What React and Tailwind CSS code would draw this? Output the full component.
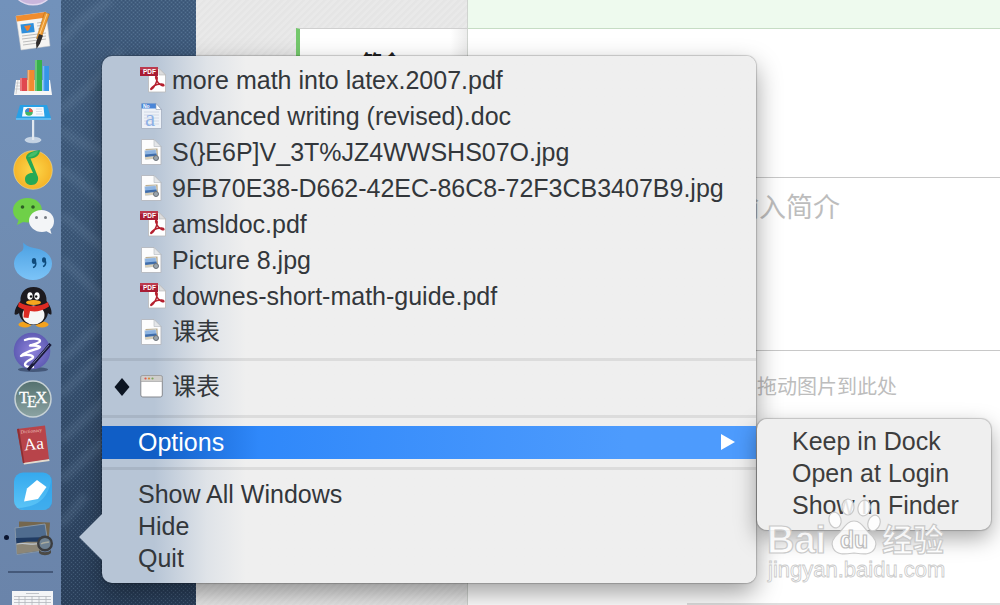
const FILES = [
  { name: 'more math into latex.2007.pdf', type: 'pdf' },
  { name: 'advanced writing (revised).doc', type: 'doc' },
  { name: 'S(}E6P]V_3T%JZ4WWSHS07O.jpg', type: 'jpg' },
  { name: '9FB70E38-D662-42EC-86C8-72F3CB3407B9.jpg', type: 'jpg' },
  { name: 'amsldoc.pdf', type: 'pdf' },
  { name: 'Picture 8.jpg', type: 'jpg' },
  { name: 'downes-short-math-guide.pdf', type: 'pdf' },
  { name: '课表', type: 'jpg', cjk: true },
]

const ACTIONS = ['Show All Windows', 'Hide', 'Quit']
const OPTIONS = ['Keep in Dock', 'Open at Login', 'Show in Finder']

/* ---------- menu icons ---------- */

function PdfIcon() {
  return (
    <svg viewBox="0 0 26 26" className="h-[26px] w-[26px] shrink-0">
      <path d="M8.500 1.500H19l6.500 6.500v17H8.500z" fill="#fff" stroke="#b9b9b9" strokeWidth=".8" />
      <path d="M19 1.500v6.500h6.500z" fill="#ddd" stroke="#b5b5b5" strokeWidth=".6" />
      <path d="M16 9.500c2 0 1 4 .2 6-.9 2.500-3.400 7-5 7-1.500-.5 2-4 6-5 3-.8 6.500-.6 6.700.7 0 1.300-3.500.1-5.500-2.200-1.700-2-3.600-6.400-2.400-6.500z" fill="none" stroke="#b5202f" strokeWidth="1.500" />
      <rect x="0" y="0" width="18" height="9" fill="#a81c34" />
      <rect x="0" y="0" width="18" height="3" fill="#bb3a4e" />
      <text x="3" y="7" fontSize="6.500" fontWeight="700" fill="#fff" fontFamily="Liberation Sans">PDF</text>
    </svg>
  )
}

function DocIcon() {
  return (
    <svg viewBox="0 0 26 26" className="h-[26px] w-[26px] shrink-0">
      <path d="M1.500.5H16l5.500 6v19h-20z" fill="#eef2f8" stroke="#a9b3c4" strokeWidth=".9" />
      <path d="M1.500.5H16l3 5H1.500z" fill="#4a86d8" />
      <path d="M16 .5v6h5.500z" fill="#fff" stroke="#8f9bb0" strokeWidth=".6" />
      <path d="M4 9h15M4 12h15M4 15h15M4 18h15M4 21h15" stroke="#c9d2e0" strokeWidth=".8" />
      <text x="5" y="23" fontSize="23" fill="#8fb1e6" fontFamily="Liberation Serif">a</text>
      <text x="3" y="4.800" fontSize="5" fontWeight="700" fill="#fff" fontFamily="Liberation Sans">No</text>
    </svg>
  )
}

function JpgIcon() {
  return (
    <svg viewBox="0 0 26 26" className="h-[26px] w-[26px] shrink-0">
      <path d="M1.500.5H14l7 7v18H1.500z" fill="#fdfdfd" stroke="#b4b8be" strokeWidth=".9" />
      <path d="M14 .5v7h7z" fill="#e4e6e9" stroke="#b4b8be" strokeWidth=".6" />
      <path d="M5.500 10l12-.6.4 9-12 1z" fill="#b9a987" />
      <path d="M4.500 11.500l11.500-1 .8 9-11.500 1z" fill="#8db4e2" stroke="#e8e8e8" strokeWidth=".5" />
      <path d="M5 15.500l11.500-1 .3 2.500-11.500 1.200z" fill="#3f6dab" />
      <path d="M5.200 18l11.500-1 .1 2.500-11.500 1z" fill="#d8cfb8" />
      <circle cx="16" cy="19" r="2.500" fill="#9aa5ae" stroke="#6a7077" strokeWidth="1" />
    </svg>
  )
}

function WindowIcon() {
  return (
    <svg viewBox="0 0 26 26" className="h-[26px] w-[26px] shrink-0">
      <rect x=".8" y="1.500" width="21.500" height="21.500" rx="2" fill="#fff" stroke="#86898e" />
      <path d="M.8 7.500v-4a2 2 0 0 1 2-2h17.500a2 2 0 0 1 2 2v4z" fill="#cfcdca" stroke="#98989a" strokeWidth=".6" />
      <circle cx="5.500" cy="4.500" r="1.100" fill="#e0554c" />
      <circle cx="9" cy="4.500" r="1.100" fill="#d98a3a" />
      <circle cx="12.500" cy="4.500" r="1.100" fill="#7ba65a" />
    </svg>
  )
}

const FILE_ICONS = { pdf: PdfIcon, doc: DocIcon, jpg: JpgIcon }

/* ---------- dock icons, all drawn on a 40x40 grid ---------- */

const DOCK = [
  {
    label: 'Pages',
    art: (
      <>
        <path d="M3 5l30-4 4 34-29 4z" fill="#f5f4f2" stroke="#c9c9c9" strokeWidth=".5" />
        <path d="M3 5l30-4 .7 5.500L3.800 10.500z" fill="#f08c2e" />
        <path d="M7.500 13.500l13-1.500 1.200 9-13 1.500z" fill="#2f8fdc" />
        <path d="M11 15l7-1-2 5-2 1z" fill="#f0802a" />
        <path d="M24 12l7-1M24 15l8-1M25 18l7-1M9 25l24-3M9 28l24-3M10 31l23-3M10 34l15-2" stroke="#b5b5b5" strokeWidth=".9" />
        <path d="M31.500 1.500l5 1.500-9 26-4-1.500z" fill="#ee9b32" stroke="#a86515" strokeWidth=".5" />
        <path d="M34 2.500l-9 25.500" stroke="#fbd08a" strokeWidth="1" />
        <path d="M26 23l4 1.500-3 8-3.500 5.500-.5-6.500z" fill="#2e2b2b" />
      </>
    ),
  },
  {
    label: 'Numbers',
    art: (
      <>
        <path d="M3 23h34l2 15H1z" fill="#f6f6f6" />
        <path d="M3 26h4M3 29h4M2 32h5M5 23L3 37" stroke="#bbb" strokeWidth=".6" />
        <rect x="7" y="21" width="7" height="13" fill="#e0484f" />
        <rect x="14.500" y="13" width="7" height="21" fill="#f28a30" />
        <rect x="22" y="3" width="7" height="31" fill="#36b24a" />
        <rect x="29.500" y="9" width="6.500" height="25" fill="#3595e8" />
        <path d="M8 21v13M15.500 13v21M23 3v31M30.500 9v25" stroke="#fff" strokeOpacity=".35" strokeWidth="1.500" />
      </>
    ),
  },
  {
    label: 'Keynote',
    art: (
      <>
        <ellipse cx="20" cy="37" rx="8" ry="2.800" fill="#c5d3e4" stroke="#dce6f0" strokeWidth=".6" />
        <rect x="19" y="16" width="2.200" height="21" fill="#e2e8ef" />
        <path d="M7 2h27l4 13H3z" fill="#28a0e6" />
        <path d="M3 15h35v2H3z" fill="#5fbaf0" />
        <path d="M10.500 4h20l1 9.500H9z" fill="#f4f9fd" />
        <circle cx="16" cy="9" r="3.800" fill="#42b462" />
        <path d="M16 9V5.200a3.800 3.800 0 0 1 3.800 3.800z" fill="#e9574a" />
        <path d="M16 9h-3.800A3.800 3.800 0 0 1 16 5.200z" fill="#3a86d8" />
        <path d="M23 6h6M23 8.500h6M23 11h7" stroke="#ccd6df" strokeWidth=".8" />
      </>
    ),
  },
  {
    label: 'QQ Music',
    art: (
      <>
        <circle cx="20" cy="21" r="19.300" fill="url(#gold)" stroke="#f3dd91" strokeWidth=".6" />
        <path d="M13 9c0-5 6-7 14-8 0 5-4 8-9.500 8.500L25 28c.8 4.500-2 8-6.500 8S12 33.500 12 30c0-4 4-6.500 8-6z" fill="#27a955" />
        <path d="M15 8c2-4 6-5.500 10-6-1 4-5 6-10 6z" fill="#46be68" />
      </>
    ),
  },
  {
    label: 'WeChat',
    art: (
      <>
        <path d="M14.500 3C6 3 0 8.500 0 15.500c0 4 2 7.500 5.500 9.500L4 30l6-3c9 2 19-3 19-11.500C29 8.500 23 3 14.500 3z" fill="#6fd048" />
        <circle cx="9.500" cy="12" r="1.800" fill="#2f5f26" />
        <circle cx="20" cy="12" r="1.800" fill="#2f5f26" />
        <path d="M28.500 15C21 15 16 20 16 26s6 11 13 11c1.500 0 3-.2 4.500-.7L38.500 39l-1.300-4.500C40 32.500 41 29.500 41 26c0-6-5-11-12.500-11z" fill="#f3f5f7" />
        <circle cx="23.500" cy="22.500" r="1.500" fill="#767c82" />
        <circle cx="32.500" cy="22.500" r="1.500" fill="#767c82" />
      </>
    ),
  },
  {
    label: 'Aliwangwang',
    art: (
      <>
        <path d="M10 1.500c2 2 5 4.500 11 5.500 10 1.500 18 7 18 15.500C39 32 30 39 20 39S1 32 1 22.500c0-5 3-9.500 8-12.500 2-2 1.500-5 1-8.500z" fill="url(#drop)" />
        <ellipse cx="21" cy="20" rx="2.200" ry="3" fill="#0f4b7c" />
        <path d="M22.500 21c1 3-.5 5-2.500 5.500" fill="none" stroke="#0f4b7c" strokeWidth="1.600" />
        <ellipse cx="31" cy="19" rx="2" ry="2.800" fill="#0f4b7c" />
        <path d="M32.300 20c1 3-.5 5-2.300 5.500" fill="none" stroke="#0f4b7c" strokeWidth="1.600" />
      </>
    ),
  },
  {
    label: 'QQ',
    art: (
      <>
        <ellipse cx="12" cy="37.500" rx="6.500" ry="3" fill="#f3a21d" />
        <ellipse cx="29" cy="37.500" rx="6.500" ry="3" fill="#f3a21d" />
        <path d="M20.500 0C12 0 7 6 7.500 14 4 18 1.500 22 1.500 27c1 1.500 3 .5 4.500-1 1 7 7 12 14.500 12S34 33 35 26c1.500 1.500 3 2 3.500 1 .5-5-2-9-5-13C34 6 29 0 20.500 0z" fill="#1c1a1f" />
        <ellipse cx="20.500" cy="28" rx="11" ry="9.500" fill="#f6f6f6" />
        <ellipse cx="17" cy="9" rx="2.700" ry="3.800" fill="#fff" />
        <ellipse cx="24" cy="9" rx="2.700" ry="3.800" fill="#fff" />
        <circle cx="18" cy="9.500" r="1.200" fill="#111" />
        <circle cx="23.200" cy="9.500" r="1.200" fill="#111" />
        <ellipse cx="20.500" cy="15.500" rx="7.500" ry="2.600" fill="#f6a61f" />
        <path d="M6 15c8 5.500 21 5.500 29 0l1 4.500C29 24.500 22 25 17 24l-1.500 7-5-.5.5-8c-2-.6-4.500-1.700-6-3z" fill="#dd2b23" />
      </>
    ),
  },
  {
    label: 'Emacs',
    art: (
      <>
        <ellipse cx="20" cy="36.500" rx="15" ry="2.500" fill="#22304e" opacity=".55" />
        <circle cx="19" cy="18" r="18.300" fill="url(#violet)" />
        <path d="M12 7c5-2 15-2 15 1 0 2-6 3-10 4.500 4 .3 9-.5 10 1.500-1 2.500-13 3-19 9 5-2 13-1 12 1.500-1 2-8 3.500-8 7 0 2 4 3 8 2.500" fill="none" stroke="#fff" strokeWidth="2.400" strokeLinecap="round" strokeLinejoin="round" />
        <path d="M37.500 11L15 37" stroke="#191a38" strokeWidth="3.200" />
        <path d="M36 12L20 30.500" stroke="#8b90c4" strokeWidth=".8" />
      </>
    ),
  },
  {
    label: 'TeXShop',
    art: (
      <>
        <circle cx="20" cy="20" r="18" fill="url(#slate)" stroke="#c7d2d6" strokeWidth="1.500" />
        <g fontSize="16" fill="#fff" stroke="#fff" strokeWidth=".3" fontFamily="Liberation Serif">
          <text x="6" y="24">T</text>
          <text x="14" y="28">E</text>
          <text x="22.500" y="24">X</text>
        </g>
      </>
    ),
  },
  {
    label: 'Dictionary',
    art: (
      <>
        <path d="M10 37l26-3 .6 2L11 39.500z" fill="#e3dccf" />
        <path d="M4 4l28-3.500L36 34l-26 4z" fill="#b8444a" />
        <path d="M4 4l2-.2L11.500 38l-1.500.2z" fill="#8d2f33" />
        <g transform="rotate(-6 20 20)" fill="#fff" fontFamily="Liberation Serif">
          <text x="9" y="7.500" fontSize="5" fill="#eec4c0">Dictionary</text>
          <text x="11" y="24.500" fontSize="17">Aa</text>
        </g>
      </>
    ),
  },
  {
    label: 'Notes',
    art: (
      <>
        <rect x="1" y="1.500" width="38" height="37.500" rx="9" fill="url(#sky)" />
        <path d="M39 4C37 24 28 36 5 37c3 2 6 2 9 2h16c6 0 9-3 9-9z" fill="#2a9be6" opacity=".55" />
        <path d="M24 9l9.500 7-8.500 12-14 2.500 3-13z" fill="#fff" />
      </>
    ),
  },
  {
    label: 'Preview',
    running: true,
    art: (
      <>
        <path d="M6 4.500l31 1-2 27-29-1z" fill="#75674e" />
        <path d="M2 11l30-4 4 26-32 4.500z" fill="#4f6c8f" stroke="#8797a8" strokeWidth="1" />
        <path d="M3 21l31-1 .7 4L3.500 27z" fill="#203b62" />
        <path d="M3.500 27c8-4 20-1 31.500-3l1 8.500-32 4.500z" fill="#8c8677" />
        <path d="M3.500 27c10-2 14 2 26-1" stroke="#c2c9cf" strokeWidth="1.200" fill="none" />
        <circle cx="32" cy="26.500" r="6.800" fill="#6d8091" stroke="#3b3d40" strokeWidth="2.400" />
        <path d="M28 27c3-2 5-1 8-2" stroke="#a8aa9f" strokeWidth="1.500" fill="none" />
        <path d="M26 33c3 3 9 3 12 0v3c-3 3-9 3-12 0z" fill="#4c4a45" />
      </>
    ),
  },
]

function Gradients() {
  return (
    <svg className="absolute h-0 w-0" aria-hidden="true">
      <defs>
        <radialGradient id="gold"><stop offset="0" stopColor="#fdd84a" /><stop offset="1" stopColor="#f5b429" /></radialGradient>
        <linearGradient id="drop" x2="0" y2="1"><stop offset="0" stopColor="#4ba0e2" /><stop offset="1" stopColor="#7cc4f8" /></linearGradient>
        <radialGradient id="violet"><stop offset="0" stopColor="#8f83dc" /><stop offset="1" stopColor="#5f5cb4" /></radialGradient>
        <linearGradient id="slate" x2="0" y2="1"><stop offset="0" stopColor="#54716f" /><stop offset="1" stopColor="#8ba3a3" /></linearGradient>
        <linearGradient id="sky" x2="0" y2="1"><stop offset="0" stopColor="#35a9ee" /><stop offset="1" stopColor="#5cc5f7" /></linearGradient>
      </defs>
    </svg>
  )
}

function Dock() {
  return (
    <nav className="flex w-[61px] shrink-0 flex-col gap-1.5 bg-linear-to-b from-[#7292bb] via-[#6f8bb0] to-[#6a84aa]">
      <svg viewBox="0 0 40 5" className="ml-[13px] h-[5px] w-10 shrink-0 overflow-visible">
        <path d="M4-2c8 9 24 9 32 0z" fill="#c9b6dc" stroke="#e1d7ee" strokeWidth="1.500" />
      </svg>
      {DOCK.map(app => (
        <button key={app.label} aria-label={app.label} className="flex h-10 shrink-0 items-center">
          <span className="flex w-[13px] justify-center">
            {app.running && <span className="h-[5px] w-[5px] rounded-full bg-[#0b1530]" />}
          </span>
          <svg viewBox="0 0 40 40" className="h-10 w-10 overflow-visible">{app.art}</svg>
        </button>
      ))}
      <div className="mx-2 mt-2 h-0.5 shrink-0 bg-[#45597a]" />
      <svg viewBox="0 0 41 14" className="mt-3 ml-3 h-3.5 w-[41px] shrink-0">
        <rect width="41" height="14" fill="#f4f5f7" />
        <path d="M14 2.500h13M2 5.500h37M2 8.500h37M2 11.500h37M7 5v9M13 5v9M20 5v9M27 5v9M34 5v9" stroke="#b2b6bd" strokeWidth=".8" />
      </svg>
    </nav>
  )
}

function Wallpaper() {
  return (
    <div className="w-[135px] shrink-0 bg-linear-to-b from-[#415d7e] via-[#3a5575] to-[#2a3f5a]">
      <svg viewBox="0 0 135 605" preserveAspectRatio="none" className="h-full w-full">
        <defs>
          <pattern id="weave" width="4" height="4" patternUnits="userSpaceOnUse">
            <path d="M0 0h1v1H0zM2 2h1v1H2z" fill="#93b0cc" opacity=".22" />
            <path d="M2 0h1v1H2zM0 2h1v1H0z" fill="#0d1e36" opacity=".14" />
          </pattern>
          <filter id="soft"><feGaussianBlur stdDeviation="3" /></filter>
        </defs>
        <g fill="none" stroke="#7d97b4" strokeWidth="9" opacity=".2" filter="url(#soft)">
          <path d="M0 45C15 20 35 10 50 0M0 110C20 95 45 75 60 50" />
          <path d="M0 130c15 12 30 18 45 22M0 170c15 8 28 20 45 32M0 215c15 10 28 20 45 35M0 260c15 10 28 26 45 40" />
          <path d="M0 360c15-10 28-30 45-38M0 395c15-16 28-26 45-40M0 440c15-12 28-26 45-40M0 480c15-12 28-26 45-40M0 525c10-12 18-20 24-30" />
        </g>
        <rect width="135" height="605" fill="url(#weave)" />
      </svg>
    </div>
  )
}

function EditorPage() {
  return (
    <div className="flex min-w-0 flex-1 bg-white">
      <aside className="w-[272px] shrink-0 border-r border-[#cfd3cf] bg-[#e8e8e8] bg-[repeating-linear-gradient(135deg,#e5e5e5_0px,#e5e5e5_2px,#e9e9e9_3px,#e9e9e9_5px)] pt-7 pl-[100px]">
        <a href="#intro" className="block h-16 border-t border-l-4 border-t-[#cfcfcf] border-l-[#74c86c] bg-linear-to-r from-white from-90% to-[#ececec] pt-5 pl-[62px] text-xl font-bold text-[#222]">
          简介
        </a>
      </aside>
      <main className="flex min-w-0 flex-1 flex-col">
        <div className="h-[29px] shrink-0 border-b border-[#c6dcc4] bg-[#eefaee]" />
        <form className="flex flex-1 flex-col">
          <input aria-label="标题" className="h-[149px] shrink-0 border-b border-[#c8c8c8] px-5 outline-none" />
          <textarea
            aria-label="简介"
            placeholder="请输入简介"
            className="h-[173px] shrink-0 resize-none border-b border-[#c8c8c8] pt-2.5 pl-[237px] text-[27px] outline-none placeholder:text-[#bdbdbd]"
          />
          <p className="pt-[22px] pl-[289px] text-xl text-[#bdbdbd]">拖动图片到此处</p>
        </form>
        <div className="ml-[219px] h-0.5 bg-[#dedede]" />
      </main>
    </div>
  )
}

function MenuRow({ icon, mark, cjk, children }) {
  return (
    <button role="menuitem" className="flex h-9 w-full items-center text-left">
      <span className="flex w-[38px] shrink-0 pl-3">
        {mark && (
          <svg viewBox="0 0 16 18" className="h-[18px] w-4"><path d="M8 0l7.500 9L8 18 .5 9z" fill="#0c1522" /></svg>
        )}
      </span>
      {icon}
      <span className={cjk ? 'pl-1.5 text-2xl' : 'pl-1.5'}>{children}</span>
    </button>
  )
}

function Separator() {
  return <div role="separator" className="my-2 h-[3px] bg-black/8" />
}

function DockMenu() {
  return (
    <div
      role="menu"
      className="absolute top-14 left-[102px] w-[654px] rounded-[10px] bg-linear-to-r from-[#b7c5d6] from-8% via-[#dfe3e8] via-16% to-[#efefef] to-22% pt-1.5 pb-[9px] text-[25px] leading-8 text-[#33373b] shadow-[0_0_1px_1px_rgba(0,0,0,0.18),0_10px_26px_rgba(0,0,0,0.38)]"
    >
      {/* pointer to the dock icon */}
      <svg viewBox="0 0 23 46" className="absolute top-[458px] -left-[23px] h-[46px] w-[23px]">
        <path d="M23 0L0 23l23 23z" fill="#b7c5d6" />
      </svg>

      {FILES.map(f => {
        const Icon = FILE_ICONS[f.type]
        return <MenuRow key={f.name} icon={<Icon />} cjk={f.cjk}>{f.name}</MenuRow>
      })}
      <Separator />
      <div className="pb-0.5">
        <MenuRow icon={<WindowIcon />} mark cjk>课表</MenuRow>
      </div>
      <Separator />
      <button
        role="menuitem"
        aria-haspopup="menu"
        className="flex h-[33px] w-full items-center justify-between bg-linear-to-r from-[#105ec6] from-8% via-[#2f88fa] via-24% to-[#4d9bfd] to-80% pr-5 pb-0.5 pl-9 text-white"
      >
        Options
        <svg viewBox="0 0 16 16" className="h-4 w-4"><path d="M1 0l14 8-14 8z" fill="#fff" /></svg>
      </button>
      <Separator />
      {ACTIONS.map(a => (
        <button key={a} role="menuitem" className="block h-8 w-full pl-9 text-left">{a}</button>
      ))}
    </div>
  )
}

function OptionsMenu() {
  return (
    <div
      role="menu"
      className="absolute top-[419px] left-[757px] w-[234px] rounded-[10px] bg-[#efefef] pt-1.5 pb-[9px] text-[25px] leading-8 text-[#3d3d3d] shadow-[0_0_1px_1px_rgba(0,0,0,0.18),0_8px_22px_rgba(0,0,0,0.35)]"
    >
      {OPTIONS.map(o => (
        <button key={o} role="menuitem" className="block h-8 w-full pl-[35px] text-left">{o}</button>
      ))}
    </div>
  )
}

function Watermark() {
  return (
    <svg viewBox="0 0 184 86" className="pointer-events-none absolute top-[498px] left-[765px] h-[86px] w-[184px]">
      <g fill="#fff" fillOpacity=".85" stroke="#c9c9c9" strokeWidth="1.200" fontFamily="Liberation Sans, 'Noto Sans CJK SC', sans-serif">
        <text x="2" y="55" fontSize="38" fontWeight="700">Bai</text>
        <ellipse cx="70" cy="22" rx="6" ry="8" transform="rotate(-14 70 22)" />
        <ellipse cx="83" cy="9" rx="6" ry="8" />
        <ellipse cx="99" cy="10" rx="6" ry="8" transform="rotate(12 99 10)" />
        <ellipse cx="109" cy="25" rx="6" ry="8" transform="rotate(20 109 25)" />
        <path d="M89 23c7 0 10 7 15 12 5 4 9 9 6 15-4 8-13 6-21 5-8 1-17 3-21-5-3-6 1-11 6-15 5-5 8-12 15-12z" />
        <text x="75" y="50" fontSize="23" fontWeight="700" stroke="#bdbdbd">du</text>
        <text x="117" y="53" fontSize="31" fontWeight="700">经验</text>
        <text x="3" y="79" fontSize="22" strokeWidth=".8">jingyan.baidu.com</text>
      </g>
    </svg>
  )
}

export default function App() {
  return (
    <div className="relative flex h-screen overflow-hidden font-['Liberation_Sans','Noto_Sans_CJK_SC',sans-serif]">
      <Gradients />
      <Dock />
      <Wallpaper />
      <EditorPage />
      <DockMenu />
      <OptionsMenu />
      <Watermark />
    </div>
  )
}
